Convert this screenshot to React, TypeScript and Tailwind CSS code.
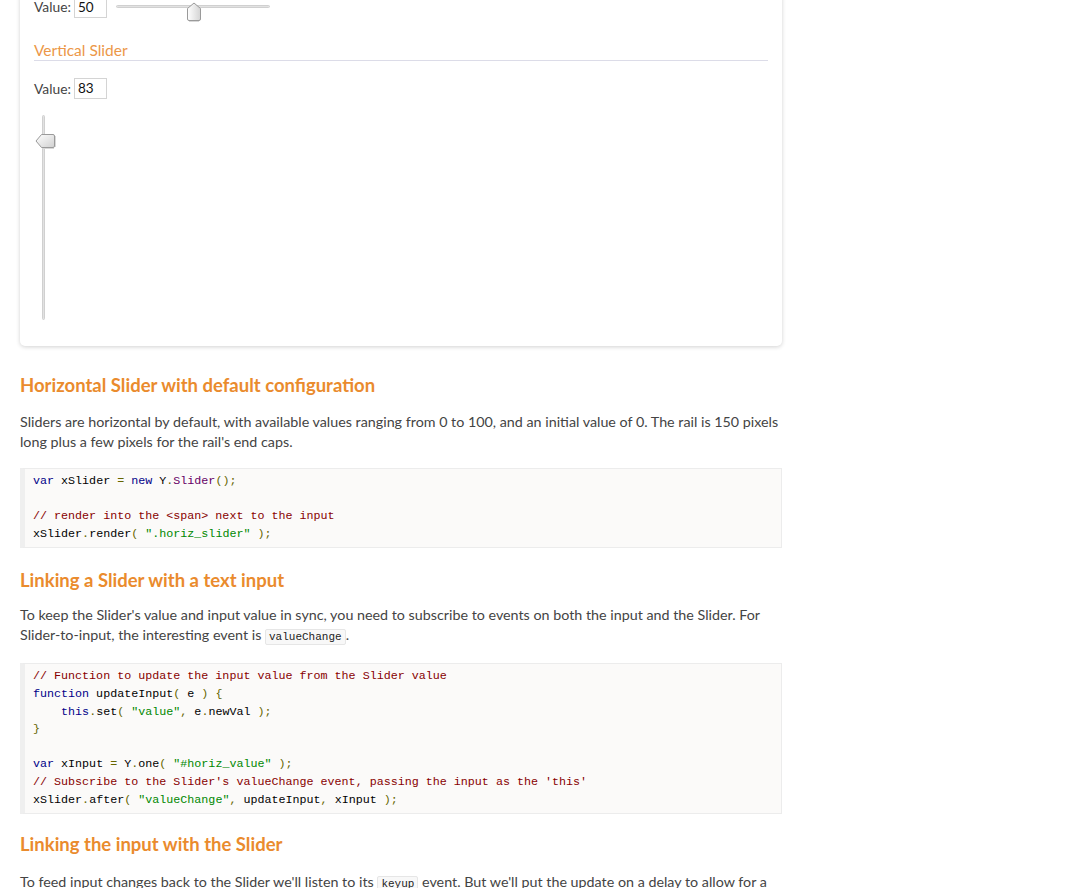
import React from "react";

const kwd = "text-[#000088]";
const com = "text-[#880000]";
const str = "text-[#008800]";
const pun = "text-[#666600]";
const typ = "text-[#660066]";

function HThumb() {
  return (
    <svg width="16" height="20" viewBox="0 0 16 20" className="absolute left-[69px] top-[-4px]">
      <defs>
        <linearGradient id="hg" x1="0" y1="0" x2="1" y2="0">
          <stop offset="0" stopColor="#ffffff" />
          <stop offset="1" stopColor="#d4d4d4" />
        </linearGradient>
      </defs>
      <path d="M1.5 6.5 L8 1 L14.5 6.5 L14.5 17 Q14.5 18.5 13 18.5 L3 18.5 Q1.5 18.5 1.5 17 Z" fill="url(#hg)" stroke="#9a9a9a" strokeWidth="1" />
      <path d="M3 19.5 L13 19.5" stroke="#d8d8d8" strokeWidth="1" />
    </svg>
  );
}

function VThumb() {
  return (
    <svg width="22" height="17" viewBox="0 0 22 17" className="absolute left-[-8px] top-[17px]">
      <defs>
        <linearGradient id="vg" x1="0" y1="0" x2="1" y2="1">
          <stop offset="0" stopColor="#ffffff" />
          <stop offset="1" stopColor="#d0d0d0" />
        </linearGradient>
      </defs>
      <path d="M1 8 L6.5 1.5 L18 1.5 Q19.5 1.5 19.5 3 L19.5 13 Q19.5 14.5 18 14.5 L6.5 14.5 Z" fill="url(#vg)" stroke="#9a9a9a" strokeWidth="1" />
      <path d="M7 15.5 L19 15.5 M20.5 3 L20.5 14" stroke="#d8d8d8" strokeWidth="1" />
    </svg>
  );
}

function ValueBox({ v }: { v: string }) {
  return (
    <div className="w-[33px] h-[21px] border border-[#d4d4d4] bg-white text-[13.5px] leading-[19px] px-[3px] text-[#111]">
      {v}
    </div>
  );
}

function Label() {
  return <span className="w-[36px] text-[13.8px]">Value:</span>;
}

function Code({ children }: { children: React.ReactNode }) {
  return (
    <pre className="bg-[#fbfaf9] border border-[#ececec] border-l-[5px] border-l-[#efefef] pl-[8px] py-[4px] font-['Liberation_Mono',monospace] text-[11.7px] leading-[17.6px] text-[#000] whitespace-pre">
      {children}
    </pre>
  );
}

function InlineCode({ children }: { children: React.ReactNode }) {
  return (
    <code className="inline-block align-baseline bg-[#f8f8f8] border border-[#e6e6e6] rounded-[2px] px-[3px] leading-[14px] font-['Liberation_Mono',monospace] text-[11px] text-[#222]">
      {children}
    </code>
  );
}

function H2({ children }: { children: React.ReactNode }) {
  return (
    <h2 className="font-['Lato',sans-serif] font-bold text-[18.5px] leading-[24px] text-[#ea8b2d]">
      {children}
    </h2>
  );
}

export default function App() {
  return (
    <div className="min-h-screen bg-white font-['Lato',sans-serif] text-[14.3px] leading-[20px] text-[#444] overflow-hidden">
      <div className="w-[762px] ml-[20px]">
        {/* demo card, scrolled so its top is cut off */}
        <div className="bg-white rounded-b-[5px] shadow-[0_1px_4px_rgba(0,0,0,0.18)] px-[14px] pb-[26px]">
          <div className="flex items-center gap-[4px] h-[22px] -mt-[4px]">
            <Label />
            <ValueBox v="50" />
            <div className="relative ml-[5px] w-[154px] h-[3px] mt-[-2px] rounded-full bg-[#e2e2e2] border border-[#d0d0d0]">
              <HThumb />
            </div>
          </div>

          <h3 className="mt-[22px] font-normal text-[15.5px] leading-[20px] text-[#ec9748] border-b border-[#dcdce8]">
            Vertical Slider
          </h3>

          <div className="flex items-center gap-[4px] mt-[17px]">
            <Label />
            <ValueBox v="83" />
          </div>

          <div className="relative mt-[16px] ml-[8px] w-[3px] h-[205px] rounded-full bg-[#e2e2e2] border border-[#d0d0d0]">
            <VThumb />
          </div>
        </div>

        <div className="mt-[27px]">
          <H2>Horizontal Slider with default configuration</H2>
          <p className="mt-[15px]">
            Sliders are horizontal by default, with available values ranging from 0 to 100, and an initial value of 0. The rail is 150 pixels long plus a few pixels for the rail's end caps.
          </p>
          <div className="mt-[16px]">
            <Code>
              <span className={kwd}>var</span> xSlider <span className={pun}>=</span> <span className={kwd}>new</span> Y<span className={pun}>.</span><span className={typ}>Slider</span><span className={pun}>();</span>
              {"\n\n"}
              <span className={com}>// render into the &lt;span&gt; next to the input</span>
              {"\n"}
              xSlider<span className={pun}>.</span>render<span className={pun}>(</span> <span className={str}>".horiz_slider"</span> <span className={pun}>);</span>
            </Code>
          </div>

          <div className="mt-[20px]">
            <H2>Linking a Slider with a text input</H2>
          </div>
          <p className="mt-[13px]">
            To keep the Slider's value and input value in sync, you need to subscribe to events on both the input and the Slider. For Slider-to-input, the interesting event is <InlineCode>valueChange</InlineCode>.
          </p>
          <div className="mt-[18px]">
            <Code>
              <span className={com}>// Function to update the input value from the Slider value</span>
              {"\n"}
              <span className={kwd}>function</span> updateInput<span className={pun}>(</span> e <span className={pun}>)</span> <span className={pun}>{"{"}</span>
              {"\n    "}
              <span className={kwd}>this</span><span className={pun}>.</span>set<span className={pun}>(</span> <span className={str}>"value"</span><span className={pun}>,</span> e<span className={pun}>.</span>newVal <span className={pun}>);</span>
              {"\n"}
              <span className={pun}>{"}"}</span>
              {"\n\n"}
              <span className={kwd}>var</span> xInput <span className={pun}>=</span> Y<span className={pun}>.</span>one<span className={pun}>(</span> <span className={str}>"#horiz_value"</span> <span className={pun}>);</span>
              {"\n"}
              <span className={com}>// Subscribe to the Slider's valueChange event, passing the input as the 'this'</span>
              {"\n"}
              xSlider<span className={pun}>.</span>after<span className={pun}>(</span> <span className={str}>"valueChange"</span><span className={pun}>,</span> updateInput<span className={pun}>,</span> xInput <span className={pun}>);</span>
            </Code>
          </div>

          <div className="mt-[18px]">
            <H2>Linking the input with the Slider</H2>
          </div>
          <p className="mt-[16px]">
            To feed input changes back to the Slider we'll listen to its <InlineCode>keyup</InlineCode> event. But we'll put the update on a delay to allow for a user to type in a full value before the slider moves.
          </p>
        </div>
      </div>
    </div>
  );
}
